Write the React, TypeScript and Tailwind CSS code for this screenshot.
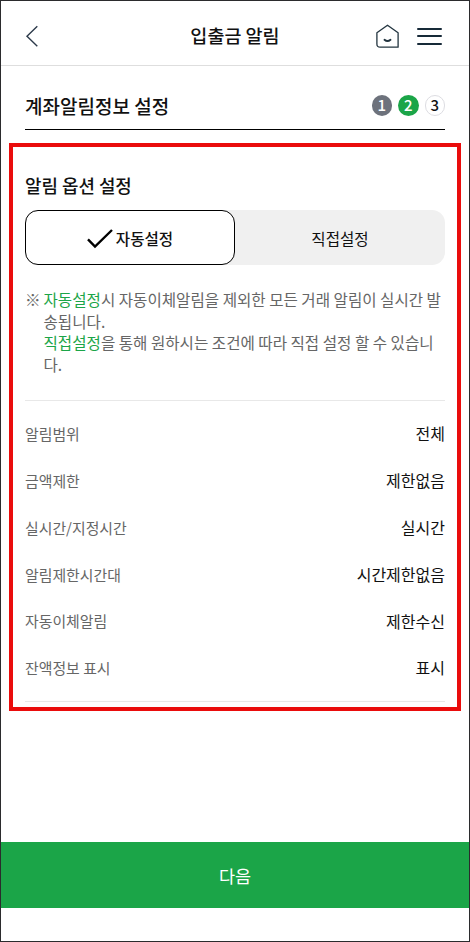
import { useState } from 'react';
import clsx from 'clsx';

const steps = [1, 2, 3];
const currentStep = 2;

const options = [
  { id: 'auto', label: '자동설정' },
  { id: 'manual', label: '직접설정' },
];

const settings = [
  { label: '알림범위', value: '전체' },
  { label: '금액제한', value: '제한없음' },
  { label: '실시간/지정시간', value: '실시간' },
  { label: '알림제한시간대', value: '시간제한없음' },
  { label: '자동이체알림', value: '제한수신' },
  { label: '잔액정보 표시', value: '표시' },
];

function Header() {
  return (
    <header className="relative flex h-[65px] shrink-0 items-center justify-between border-b border-[#dedede] pt-[6px] pr-[27px] pl-[24px]">
      <button aria-label="뒤로">
        <svg width="14" height="22" viewBox="0 0 14 22" fill="none" stroke="#2c3a4a" strokeWidth="1.4">
          <path d="M12.3 1.2L2 11.2L12.3 21.2" />
        </svg>
      </button>
      <h1 className="absolute inset-x-0 top-5 text-center text-[18.5px] leading-7 font-medium">입출금 알림</h1>
      <div className="relative flex items-center gap-[18px]">
        <button aria-label="홈">
          <svg width="23" height="24" viewBox="0 0 23 24" fill="none" stroke="#22343f" strokeWidth="1.3" strokeLinejoin="round">
            <path d="M11.5 1.2L22.1 8.8V23.2H4.1Q0.9 23.2 0.9 20V8.8Z" />
            <path d="M8.5 15.8Q11.5 18.4 14.5 15.8" strokeWidth="1.9" strokeLinecap="round" />
          </svg>
        </button>
        <button aria-label="메뉴" className="flex w-[25px] flex-col gap-[5.5px]">
          <span className="h-[2px] rounded-full bg-[#172a38]" />
          <span className="h-[2px] rounded-full bg-[#172a38]" />
          <span className="h-[2px] rounded-full bg-[#172a38]" />
        </button>
      </div>
    </header>
  );
}

function Stepper() {
  return (
    <ol className="flex gap-[6px]">
      {steps.map((step) => (
        <li
          key={step}
          className={clsx(
            'flex size-[20.5px] items-center justify-center rounded-full pb-[2px] text-[15px] leading-none font-medium',
            step < currentStep && 'bg-[#6d727c] text-white',
            step === currentStep && 'bg-[#1ba548] text-white',
            step > currentStep && 'border border-[#dddde2] text-[#111111]'
          )}
        >
          {step}
        </li>
      ))}
    </ol>
  );
}

export default function App() {
  const [selected, setSelected] = useState('auto');

  return (
    <div className="flex h-[942px] w-[470px] flex-col border border-[#2b2b2d] bg-white font-['Noto_Sans_CJK_KR',sans-serif] text-[#111111]">
      <Header />

      <div className="mx-6 flex h-[64px] shrink-0 items-center justify-between border-b border-black pt-[16px]">
        <h2 className="text-[19px] leading-7 font-medium">계좌알림정보 설정</h2>
        <Stepper />
      </div>

      <section className="mx-2 mt-[13px] h-[568px] shrink-0 border-4 border-[#ea0c0c] px-3 pt-[24px]">
        <h3 className="text-[17.9px] leading-7 font-medium">알림 옵션 설정</h3>

        {/* Option toggle */}
        <div className="mt-[11px] flex h-[55px] rounded-[13px] bg-[#f0f0f0]">
          {options.map((option) => (
            <button
              key={option.id}
              onClick={() => setSelected(option.id)}
              className={clsx(
                'flex flex-1 items-center justify-center gap-[3px] rounded-[13px] border pt-[2px] text-[15.6px]',
                selected === option.id ? 'border-black bg-white font-medium' : 'border-transparent'
              )}
            >
              {selected === option.id && (
                <svg width="26" height="20" viewBox="0 0 26 20" fill="none" stroke="#000" strokeWidth="2.4">
                  <path d="M1 10.4L8 17.6L25 1" />
                </svg>
              )}
              {option.label}
            </button>
          ))}
        </div>

        <div className="mt-[24px] flex h-[112px] border-b border-[#e8e8e8] text-[15.6px] leading-[21.6px] text-[#666666]">
          <span className="w-[18.5px] shrink-0">※</span>
          <p className="break-all">
            <span className="text-[#1ba548]">자동설정</span>시 자동이체알림을 제외한 모든 거래 알림이 실시간 발송됩니다.
            <br />
            <span className="text-[#1ba548]">직접설정</span>을 통해 원하시는 조건에 따라 직접 설정 할 수 있습니다.
          </p>
        </div>

        {/* Current settings */}
        <dl className="border-b border-[#e8e8e8] pt-[9.5px] pb-[9.5px]">
          {settings.map((item) => (
            <div key={item.label} className="flex h-[46.8px] items-center justify-between">
              <dt className="pt-px text-[14.9px] text-[#666666]">{item.label}</dt>
              <dd className="pb-px text-base">{item.value}</dd>
            </div>
          ))}
        </dl>
      </section>

      <button className="mt-auto mb-[33px] h-[66px] shrink-0 bg-[#1ba548] pt-[2px] text-[17.5px] text-white">다음</button>
    </div>
  );
}
